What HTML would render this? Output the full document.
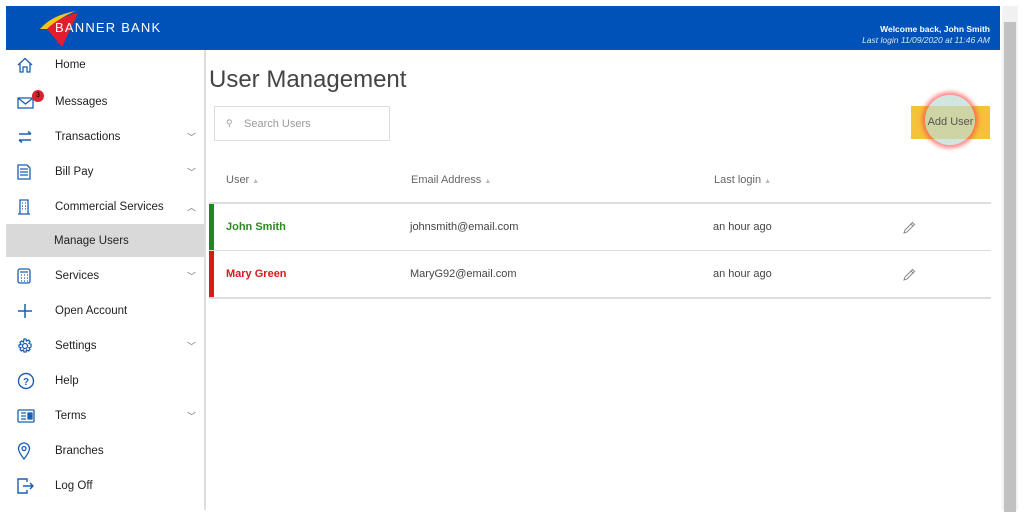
<!DOCTYPE html>
<html><head><meta charset="utf-8"><style>
*{margin:0;padding:0;box-sizing:border-box}
body{width:1024px;height:510px;overflow:hidden;background:#fff;font-family:"Liberation Sans",sans-serif;position:relative;color:#333}
.hdr{position:absolute;left:6px;top:6px;width:994px;height:44px;background:#0052b9}
.logo{position:absolute;left:49px;top:14px;color:#fff;font-size:13px;letter-spacing:1.2px}
.wel{position:absolute;right:10px;top:18px;color:#fff;font-size:8.5px;text-align:right;line-height:11px}
.wel i{opacity:.85}
.side{position:absolute;left:6px;top:50px;width:200px;height:460px;border-right:2px solid #ddd}
.it{position:absolute;left:0;width:198px;height:34px;font-size:11.5px;color:#222}
.it span{position:absolute;left:49px;top:50%;transform:translateY(-50%)}
.it svg{position:absolute;left:11px;top:50%;transform:translateY(-50%)}
.chev{position:absolute;left:181px;top:50%;transform:translateY(-50%);font-size:9px;color:#777}
.sel{background:#d9d9d9}
.sb{position:absolute;left:1002px;top:6px;width:16px;height:504px;background:#f1f1f1}
.sb div{position:absolute;left:2px;top:16px;width:12px;height:490px;background:#c1c1c1}
h1{position:absolute;left:209px;top:66px;font-weight:normal;font-size:24px;color:#444}
.search{position:absolute;left:214px;top:106px;width:176px;height:35px;border:1px solid #ddd;font-size:11px;color:#999;padding:11px 0 0 29px}
.btn{position:absolute;left:911px;top:106px;width:79px;height:33px;background:#f5c23a}
.glow{position:absolute;left:925px;top:95px;width:50px;height:50px;border-radius:50%;background:rgba(190,220,210,.7);box-shadow:0 0 4px 3px rgba(255,80,80,.7)}
.btn2{position:absolute;left:911px;top:106px;width:79px;height:33px;font-size:11px;color:#555;text-align:center;line-height:33px}
.th{position:absolute;top:174px;font-size:11px;color:#666}
.th small{font-size:7px;color:#bbb}
.line{position:absolute;left:209px;width:782px;background:#ddd}
.td{position:absolute;font-size:11px;color:#444}
.bar{position:absolute;left:209px;width:5px}
</style></head><body>
<div class="hdr">
<svg style="position:absolute;left:32px;top:3px" width="44" height="40" viewBox="0 0 44 40"><path d="M2 20 Q14 6 38 2 Q20 9 12 20Z" fill="#f4c41c"/><path d="M9 20 Q22 7 40 4 L24 38Z" fill="#e01e2d"/></svg>
<div class="logo">BANNER BANK</div>
<div class="wel"><b>Welcome back, John Smith</b><br><i>Last login 11/09/2020 at 11:46 AM</i></div>
</div>
<div class="side">
<div class="it" style="top:-2px"><svg width="16" height="16" viewBox="0 0 16 16" fill="none" stroke="#1a5fb4" stroke-width="1.3"><path d="M1 8L8 1.5 15 8M3 6.5V15H6V10H10V15H13V6.5"/></svg><span>Home</span></div>
<div class="it" style="top:35px"><svg width="18" height="14" viewBox="0 0 18 14" fill="none" stroke="#1a5fb4" stroke-width="1.3"><rect x="1" y="3" width="15" height="10"/><path d="M1 3l7.5 6L16 3"/></svg><div style="position:absolute;left:26px;top:5px;width:12px;height:12px;border-radius:50%;background:#d9242f;color:#000;font-size:7px;text-align:center;line-height:12px">3</div><span>Messages</span></div>
<div class="it" style="top:70px"><svg width="16" height="14" viewBox="0 0 16 14" fill="none" stroke="#1a5fb4" stroke-width="1.5"><path d="M2 4H14M11 1.5L14 4M14 10H2M5 12.5L2 10"/></svg><span>Transactions</span><div class="chev">﹀</div></div>
<div class="it" style="top:105px"><svg width="14" height="16" viewBox="0 0 14 16" fill="none" stroke="#1a5fb4" stroke-width="1.3"><path d="M1 1H10L13 4V15H1Z M3 5H11M3 8H11M3 11H11"/></svg><span>Bill Pay</span><div class="chev">﹀</div></div>
<div class="it" style="top:140px"><svg width="14" height="16" viewBox="0 0 14 16" fill="none" stroke="#1a5fb4" stroke-width="1.3"><path d="M3 1H11V15H3Z M1 15H13 M5 4H6M8 4H9M5 7H6M8 7H9M5 10H6M8 10H9"/></svg><span>Commercial Services</span><div class="chev">︿</div></div>
<div class="it sel" style="top:174px;height:33px"><span style="left:48px">Manage Users</span></div>
<div class="it" style="top:209px"><svg width="14" height="16" viewBox="0 0 14 16" fill="none" stroke="#1a5fb4" stroke-width="1.3"><rect x="1" y="1" width="12" height="14" rx="2"/><path d="M3 4H11M4 7H5M7 7H8M10 7H11M4 10H5M7 10H8M10 10H11M4 13H5M7 13H8M10 13H11"/></svg><span>Services</span><div class="chev">﹀</div></div>
<div class="it" style="top:244px"><svg width="16" height="16" viewBox="0 0 16 16" stroke="#1a5fb4" stroke-width="1.5"><path d="M8 1V15M1 8H15"/></svg><span>Open Account</span></div>
<div class="it" style="top:279px"><svg width="16" height="16" viewBox="0 0 16 16" fill="none" stroke="#1a5fb4" stroke-width="1.3"><circle cx="8" cy="8" r="2.5"/><path d="M7 1H9L9.5 3 11.5 2 13 3.5 12 5.5 14 6V9L12 9.5 13 11.5 11.5 13 9.5 12 9 14H7L6.5 12 4.5 13 3 11.5 4 9.5 2 9V7L4 6.5 3 4.5 4.5 3 6.5 4Z"/></svg><span>Settings</span><div class="chev">﹀</div></div>
<div class="it" style="top:314px"><svg width="18" height="18" viewBox="0 0 18 18" fill="none" stroke="#1a5fb4" stroke-width="1.4"><circle cx="9" cy="9" r="7.5"/><text x="9" y="13" font-size="10" text-anchor="middle" fill="#1a5fb4" stroke="none" font-family="Liberation Sans" font-weight="bold">?</text></svg><span>Help</span></div>
<div class="it" style="top:349px"><svg width="18" height="14" viewBox="0 0 18 14" fill="none" stroke="#1a5fb4" stroke-width="1.3"><rect x="1" y="1" width="16" height="12" rx="1"/><path d="M4 4H9M4 7H9M4 10H9"/><rect x="11" y="4" width="4" height="6" fill="#1a5fb4"/></svg><span>Terms</span><div class="chev">﹀</div></div>
<div class="it" style="top:384px"><svg width="14" height="18" viewBox="0 0 14 18" fill="none" stroke="#1a5fb4" stroke-width="1.3"><path d="M7 17C3 12 1.5 9 1.5 6.5A5.5 5.5 0 0 1 12.5 6.5C12.5 9 11 12 7 17Z"/><circle cx="7" cy="6.5" r="2"/></svg><span>Branches</span></div>
<div class="it" style="top:419px"><svg width="18" height="16" viewBox="0 0 18 16" fill="none" stroke="#1a5fb4" stroke-width="1.4"><path d="M10 4V1H1V15H10V12M6 8H16M13 5L16 8 13 11"/></svg><span>Log Off</span></div>
</div>
<div class="sb"><div></div></div>
<h1>User Management</h1>
<div class="search"><span style="position:absolute;left:11px;top:11px;font-size:9px;color:#999">&#9906;</span>Search Users</div>
<div class="btn"></div><div class="glow"></div><div class="btn2">Add User</div>
<div class="th" style="left:226px">User <small>▲</small></div>
<div class="th" style="left:411px">Email Address <small>▲</small></div>
<div class="th" style="left:714px">Last login <small>▲</small></div>
<div class="line" style="top:202px;height:2px"></div>
<div class="line" style="top:250px;height:1px"></div>
<div class="line" style="top:297px;height:2px"></div>
<div class="bar" style="top:204px;height:46px;background:#1a8a1a"></div>
<div class="bar" style="top:251px;height:46px;background:#d21c1c"></div>
<div class="td" style="left:226px;top:221px;color:#2a8a1e;font-weight:bold">John Smith</div>
<div class="td" style="left:410px;top:221px">johnsmith@email.com</div>
<div class="td" style="left:713px;top:221px">an hour ago</div>
<div class="td" style="left:226px;top:268px;color:#d21c1c;font-weight:bold">Mary Green</div>
<div class="td" style="left:410px;top:268px">MaryG92@email.com</div>
<div class="td" style="left:713px;top:268px">an hour ago</div>
<svg style="position:absolute;left:903px;top:221px" width="13" height="13" viewBox="0 0 13 13" fill="none" stroke="#888" stroke-width="1"><path d="M1 12L2 9 9.5 1.5 11.5 3.5 4 11Z M8 3L10 5"/></svg>
<svg style="position:absolute;left:903px;top:268px" width="13" height="13" viewBox="0 0 13 13" fill="none" stroke="#888" stroke-width="1"><path d="M1 12L2 9 9.5 1.5 11.5 3.5 4 11Z M8 3L10 5"/></svg>
</body></html>
